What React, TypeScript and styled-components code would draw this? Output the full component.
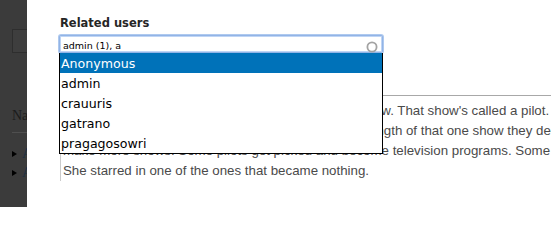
import React from 'react';
import styled, { createGlobalStyle } from 'styled-components';

const suggestions = ['Anonymous', 'admin', 'crauuris', 'gatrano', 'pragagosowri'];

const bodyLines = [
  "Well, the way they make shows is, they make one show. That show's called a pilot. Then they show that",
  "show to the people who make shows, and on the strength of that one show they decide if they're going to",
  "make more shows. Some pilots get picked and become television programs. Some don't, become nothing.",
  'She starred in one of the ones that became nothing.',
];

const App = () => (
  <>
    <GlobalStyle />
    <Page>
      <Backdrop>
        <BackdropInner>
          <GhostField />
          <GhostTitle>Navigation</GhostTitle>
          <GhostList>
            <GhostItem>Add content</GhostItem>
            <GhostItem>Administer</GhostItem>
          </GhostList>
        </BackdropInner>
      </Backdrop>

      <Overlay>
        <Label htmlFor="related-users">Related users</Label>
        <Field>
          <Input id="related-users" value="admin (1), a" readOnly />
          <Throbber width="12" height="12" viewBox="0 0 12 12">
            <circle cx="6" cy="6" r="4.6" fill="none" stroke="#a3a3a3" strokeWidth="1.8" />
          </Throbber>
          <Suggestions>
            {suggestions.map((name, index) => (
              <Suggestion key={name} $selected={index === 0}>{name}</Suggestion>
            ))}
          </Suggestions>
        </Field>
        <Editor>
          {bodyLines.map((line) => (
            <EditorLine key={line}>{line}</EditorLine>
          ))}
        </Editor>
      </Overlay>
    </Page>
  </>
);

const GlobalStyle = createGlobalStyle`
  html, body {
    margin: 0;
    padding: 0;
    background: #fff;
  }
  body {
    overflow: hidden;
  }
`;

const Page = styled.div`
  display: flex;
  width: 551px;
  height: 207px;
  overflow: hidden;
  font-family: "DejaVu Sans", Verdana, sans-serif;
`;

const Backdrop = styled.aside`
  flex: 0 0 27px;
  background: #3b3b3b;
  overflow: hidden;
`;

const BackdropInner = styled.div`
  width: 220px;
  padding: 29px 0 0 12px;
`;

const GhostField = styled.div`
  width: 60px;
  height: 22px;
  border: 1px solid #2e2e2e;
  background: #3e3e3e;
`;

const GhostTitle = styled.h2`
  margin: 53px 0 0;
  padding-bottom: 6px;
  border-bottom: 1px solid #4f4f4f;
  font-family: "Liberation Serif", serif;
  font-size: 14px;
  font-weight: normal;
  line-height: 20px;
  color: #1c1c1c;
`;

const GhostList = styled.ul`
  list-style: none;
  margin: 11px 0 0;
  padding: 0;
`;

const GhostItem = styled.li`
  display: flex;
  align-items: center;
  gap: 5px;
  height: 19px;
  font-family: "Liberation Serif", serif;
  font-size: 14px;
  color: #1a2e44;

  &::before {
    content: '';
    border-style: solid;
    border-width: 3.5px 0 3.5px 5px;
    border-color: transparent transparent transparent #000;
  }
`;

const Overlay = styled.main`
  flex: 1;
  min-width: 0;
  background: #fff;
  padding: 16px 0 0 32px;
  overflow: hidden;
`;

const Label = styled.label`
  display: block;
  margin-left: 1px;
  font-size: 11.5px;
  font-weight: bold;
  line-height: 14px;
  color: #262626;
`;

const Field = styled.div`
  position: relative;
  width: 324px;
  margin-top: 5px;
`;

const Input = styled.input`
  display: block;
  box-sizing: border-box;
  width: 100%;
  height: 18px;
  margin: 0;
  padding: 3px 20px 0 3px;
  border: 1px solid #92b4e6;
  border-radius: 2px;
  box-shadow: 0 0 0 1px rgba(140, 178, 232, 0.7), inset 0 0 0 1px rgba(175, 203, 242, 0.8);
  outline: none;
  background: #fff;
  font-family: "DejaVu Sans", Verdana, sans-serif;
  font-size: 9.5px;
  color: #000;
`;

const Throbber = styled.svg`
  position: absolute;
  top: 6px;
  right: 5px;
`;

const Suggestions = styled.ul`
  position: absolute;
  top: 100%;
  left: 0;
  z-index: 2;
  box-sizing: border-box;
  width: 324px;
  margin: 0;
  padding: 0;
  list-style: none;
  border: 1px solid #000;
  border-top: none;
  background: #fff;
`;

const Suggestion = styled.li<{ $selected: boolean }>`
  height: 20px;
  padding: 1px 0 0 1px;
  box-sizing: border-box;
  font-size: 12.6px;
  line-height: 20px;
  white-space: nowrap;
  color: ${({ $selected }) => ($selected ? '#fff' : '#000')};
  background: ${({ $selected }) => ($selected ? '#0072b9' : '#fff')};
`;

const Editor = styled.div`
  width: 760px;
  margin: 42px 0 0 1px;
  padding: 5px 0 0 2px;
  border-top: 1px solid #a8a8a8;
  border-left: 1px solid #cbcbcb;
  font-family: "Liberation Sans", Arial, sans-serif;
  font-size: 13.3px;
  line-height: 20px;
  color: #4a4a4a;
`;

const EditorLine = styled.p`
  margin: 0;
  white-space: pre;
`;

export default App;
